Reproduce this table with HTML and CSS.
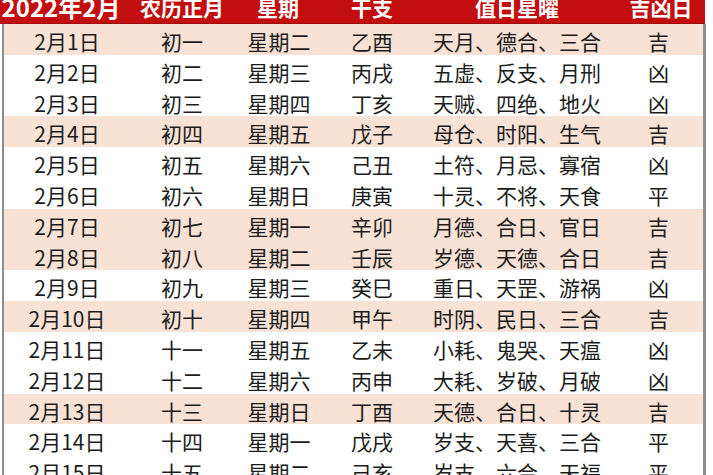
FILE: index.html
```html
<!DOCTYPE html>
<html lang="zh-CN">
<head>
<meta charset="utf-8">
<title>2022年2月 黄历</title>
<link rel="stylesheet" href="styles.css">
</head>
<body>
<div class="sheet">
  <div class="head">
    <div class="h h1">2022年2月</div>
    <div class="h">农历正月</div>
    <div class="h">星期</div>
    <div class="h">干支</div>
    <div class="h">值日星曜</div>
    <div class="h h6">吉凶日</div>
  </div>
  <div class="body">
    <div class="row ji"><span>2月1日</span><span>初一</span><span>星期二</span><span>乙酉</span><span>天月、德合、三合</span><span>吉</span></div>
    <div class="row"><span>2月2日</span><span>初二</span><span>星期三</span><span>丙戌</span><span>五虚、反支、月刑</span><span>凶</span></div>
    <div class="row"><span>2月3日</span><span>初三</span><span>星期四</span><span>丁亥</span><span>天贼、四绝、地火</span><span>凶</span></div>
    <div class="row ji"><span>2月4日</span><span>初四</span><span>星期五</span><span>戊子</span><span>母仓、时阳、生气</span><span>吉</span></div>
    <div class="row"><span>2月5日</span><span>初五</span><span>星期六</span><span>己丑</span><span>土符、月忌、寡宿</span><span>凶</span></div>
    <div class="row"><span>2月6日</span><span>初六</span><span>星期日</span><span>庚寅</span><span>十灵、不将、天食</span><span>平</span></div>
    <div class="row ji"><span>2月7日</span><span>初七</span><span>星期一</span><span>辛卯</span><span>月德、合日、官日</span><span>吉</span></div>
    <div class="row ji"><span>2月8日</span><span>初八</span><span>星期二</span><span>壬辰</span><span>岁德、天德、合日</span><span>吉</span></div>
    <div class="row"><span>2月9日</span><span>初九</span><span>星期三</span><span>癸巳</span><span>重日、天罡、游祸</span><span>凶</span></div>
    <div class="row ji"><span>2月10日</span><span>初十</span><span>星期四</span><span>甲午</span><span>时阴、民日、三合</span><span>吉</span></div>
    <div class="row"><span>2月11日</span><span>十一</span><span>星期五</span><span>乙未</span><span>小耗、鬼哭、天瘟</span><span>凶</span></div>
    <div class="row"><span>2月12日</span><span>十二</span><span>星期六</span><span>丙申</span><span>大耗、岁破、月破</span><span>凶</span></div>
    <div class="row ji"><span>2月13日</span><span>十三</span><span>星期日</span><span>丁酉</span><span>天德、合日、十灵</span><span>吉</span></div>
    <div class="row"><span>2月14日</span><span>十四</span><span>星期一</span><span>戊戌</span><span>岁支、天喜、三合</span><span>平</span></div>
    <div class="row"><span>2月15日</span><span>十五</span><span>星期二</span><span>己亥</span><span>岁支、六合、天福</span><span>平</span></div>
  </div>
</div>
</body>
</html>
```
FILE: styles.css
```css
html, body {
  margin: 0;
  padding: 0;
  background: #ffffff;
  overflow: hidden;
}
body {
  font-family: "Noto Sans CJK SC", "Noto Sans", sans-serif;
  color: #1c1c1c;
}
.sheet {
  width: 706px;
  height: 475px;
  overflow: hidden;
}
.head {
  width: 705px;
  height: 24px;
  background: #c20e0e;
  display: grid;
  grid-template-columns: 122px 120px 72px 116px 174px 101px;
  overflow: hidden;
  border-bottom: 1px solid #a00a0a;
  box-sizing: border-box;
}
.h {
  color: #ffffff;
  font-weight: 700;
  font-size: 21px;
  line-height: 15px;
  text-align: center;
  white-space: nowrap;
}
.h1 {
  font-size: 24px;
  line-height: 14px;
}
.h6 {
  padding-left: 13px;
}
.body {
  margin-left: 2px;
  width: 699px;
  border-left: 2px solid #8c8c8c;
  border-right: 3px solid #8f8f8f;
}
.row {
  display: grid;
  grid-template-columns: 126px 104px 90px 96px 194px 89px;
  height: 30.8px;
  font-size: 21px;
  line-height: 30.8px;
  background: #ffffff;
}
.row span {
  text-align: center;
  white-space: nowrap;
  padding-top: 2px;
}
.row.ji {
  background: #f8e2d6;
}
```
